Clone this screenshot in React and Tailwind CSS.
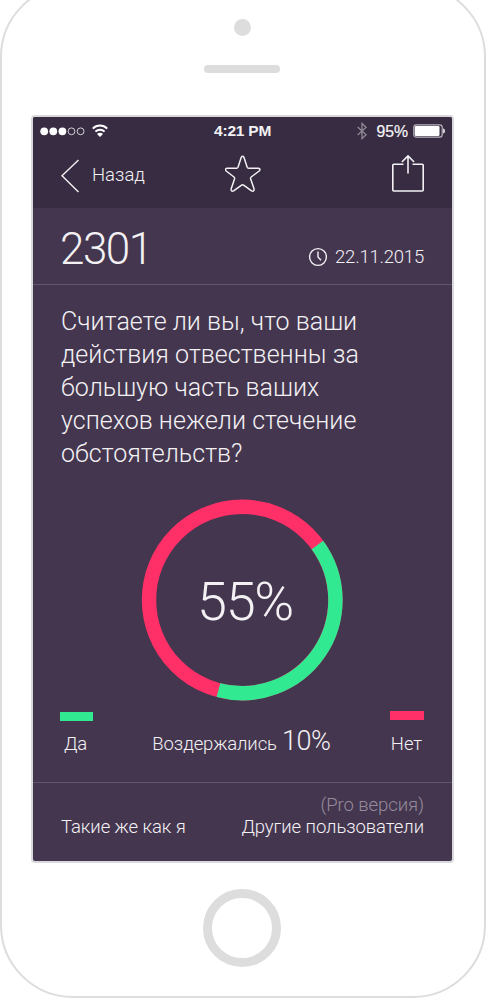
import React from "react";

function StatusBar() {
  return (
    <div className="flex h-[28px] items-center justify-between pl-[7px] pr-[7px]">
      <svg className="block h-[28px] w-[80px]" viewBox="0 0 80 28" fill="none">
        <circle cx="4.2" cy="14.3" r="3.9" fill="#fff" />
        <circle cx="13.3" cy="14.3" r="3.9" fill="#fff" />
        <circle cx="22.4" cy="14.3" r="3.9" fill="#fff" />
        <circle cx="31.5" cy="14.3" r="3.4" stroke="#d5d2d8" />
        <circle cx="40.6" cy="14.3" r="3.4" stroke="#d5d2d8" />
        <path d="M52.8 11.6a10.2 10.2 0 0 1 14.4 0" stroke="#fff" strokeWidth="2" />
        <path d="M55.4 14.6a6.5 6.5 0 0 1 9.2 0" stroke="#fff" strokeWidth="2" />
        <path d="M60 20l-3-3.1a4.2 4.2 0 0 1 6 0z" fill="#fff" />
      </svg>
      <div className="flex-1 pl-[94px] text-left">
        <span className="whitespace-nowrap font-['Liberation_Sans',Arial,sans-serif] text-[15.5px] font-bold leading-[28px] tracking-[-0.2px]">4:21 PM</span>
      </div>
      <svg className="mr-[9px] block h-[18px] w-[10px]" viewBox="0 0 10 18" fill="none" stroke="#8f8995" strokeWidth="1.3">
        <path d="M0.7 5l8.4 7.8L5 16.6V1.4l4.1 3.8L0.7 13" />
      </svg>
      <span className="mr-[5px] mt-px font-['Liberation_Sans',Arial,sans-serif] text-[15.8px] font-normal leading-[28px] [-webkit-text-stroke:0.2px_white]">95%</span>
      <svg className="block h-[14px] w-[32px]" viewBox="0 0 32 14" fill="none">
        <rect x="0.8" y="0.9" width="28.4" height="12.2" rx="2.4" stroke="#b9b5bd" strokeWidth="1.2" />
        <rect x="1.8" y="2" width="24.7" height="10" rx="1.2" fill="#fff" />
        <path d="M30.5 4.8c1.6.9 1.6 3.5 0 4.4z" fill="#d5d2d8" stroke="#d5d2d8" />
      </svg>
    </div>
  );
}

function NavBar() {
  return (
    <div className="flex h-[63px] items-start">
      <svg className="ml-[28px] mt-[14px] block h-[34px] w-[19px]" viewBox="0 0 19 34" fill="none" stroke="#f3f1f4" strokeWidth="1.4">
        <path d="M17.5 1L1 16.8L17.5 33" />
      </svg>
      <span className="ml-[12px] mt-[17px] w-[60px] whitespace-nowrap text-[18.5px] leading-[26px]">Назад</span>
      <svg className="ml-[73px] mt-[9px] block h-[39px] w-[36px]" viewBox="0 0 36 39" fill="none" stroke="#f3f1f4" strokeWidth="1.5" strokeLinejoin="round">
        <path d="M16.2 3.4Q17.6 1.2 19 3.4L22.2 13.2Q22.6 14.2 23.6 14.2H33.4Q36 14.8 34.2 17L26.2 23Q25.3 23.8 25.6 24.8L29.1 35Q29.3 37.9 26.6 36.9L18.6 31.1Q17.6 30.4 16.6 31.1L8.6 36.9Q5.9 37.9 6.1 35L9.6 24.8Q9.9 23.8 9 23L1.2 17Q-.6 14.8 1.8 14.2H11.6Q12.6 14.2 13 13.2Z" />
      </svg>
      <svg className="ml-[130px] mt-[9px] block h-[40px] w-[34px]" viewBox="0 0 34 40" fill="none" stroke="#f3f1f4" strokeWidth="1.6" strokeLinejoin="round">
        <path d="M12.5 10.2H2.8Q1.8 10.2 1.8 11.2V36Q1.8 37 2.8 37H31.2Q32.2 37 32.2 36V11.2Q32.2 10.2 31.2 10.2H21.5M17 19.6V2M10.9 8L17 1.9L23.1 8" />
      </svg>
    </div>
  );
}

function Donut() {
  return (
    <div className="ml-[108px] grid h-[202px] w-[202px] place-items-center">
      <svg className="col-start-1 row-start-1 block h-[202px] w-[202px]" viewBox="0 0 202 202" fill="none" strokeWidth="14.4">
        <circle cx="101.2" cy="101" r="93.2" stroke="#ff2f67" />
        <path d="M176.4 45.9A93.2 93.2 0 0 1 77.4 191.1" stroke="#31e991" />
      </svg>
      <span className="col-start-1 row-start-1 ml-[6px] mt-[3px] whitespace-nowrap text-[54px] font-light leading-[60px] tracking-[-1.3px]">55%</span>
    </div>
  );
}

export default function App() {
  return (
    <div className="h-[998px] w-[486px] overflow-hidden bg-white font-['Roboto','Noto_Sans',sans-serif] font-light text-[#f3f1f4]">
      <div className="-mt-[16px] flex h-[1014px] w-[486px] flex-col rounded-[73px] border-2 border-[#ddd] bg-white">
        <div className="ml-[231.5px] mt-[33px] h-[17px] w-[17px] shrink-0 rounded-full bg-[#ddd]" />
        <div className="ml-[202px] mt-[28.5px] h-[8.5px] w-[76px] shrink-0 rounded-full bg-[#ddd]" />
        <div className="ml-[29px] mt-[42px] w-[423px] shrink-0 rounded-[4px] border-2 border-[#d9d8da] bg-[#44364f]">
          <div className="h-[91px] rounded-t-[2px] bg-[#372c42]">
            <StatusBar />
            <NavBar />
          </div>
          <div className="flex h-[77px] justify-between border-b border-[#62566c] pl-[27px] pr-[28px]">
            <span className="mt-[15px] text-[44px] leading-[52px] tracking-[-1.5px]">2301</span>
            <div className="mt-[36px] flex h-[26px] items-center">
              <svg className="mr-[7px] block h-[20px] w-[20px]" viewBox="0 0 20 20" fill="none" stroke="#f3f1f4" strokeWidth="1.4">
                <circle cx="10" cy="10" r="8.4" />
                <path d="M10 4.5V10L13 13.2" />
              </svg>
              <span className="text-[18.5px] leading-[26px] tracking-[-0.2px]">22.11.2015</span>
            </div>
          </div>
          <p className="ml-[28px] mt-[20px] h-[165px] whitespace-nowrap text-[25px] leading-[33px] tracking-[0.03px]">
            Считаете ли вы, что ваши<br />
            действия отвественны за<br />
            большую часть ваших<br />
            успехов нежели стечение<br />
            обстоятельств?
          </p>
          <div className="mt-[29px]">
            <Donut />
          </div>
          <div className="flex h-[81px] items-start justify-between pl-[27px] pr-[28px]">
            <div className="flex w-[33px] flex-col items-center pt-[11px]">
              <div className="h-[9px] w-[33px] bg-[#31e991]" />
              <span className="mr-[2px] mt-[10px] text-[18.5px] leading-[26px] tracking-[-0.2px]">Да</span>
            </div>
            <div className="flex items-baseline whitespace-nowrap pt-[24px] text-[18.5px] leading-[32px] tracking-[-0.1px]">
              Воздержались <span className="ml-[5px] text-[27px] tracking-[-0.4px]">10%</span>
            </div>
            <div className="flex w-[34px] flex-col items-center pt-[10px]">
              <div className="h-[9px] w-[34px] bg-[#ff2f67]" />
              <span className="mr-[1px] mt-[11px] text-[18.5px] leading-[26px]">Нет</span>
            </div>
          </div>
          <div className="flex h-[79px] items-start justify-between border-t border-[#62566c] pl-[28px] pr-[28px] text-[18.5px] leading-[22px] tracking-[-0.07px]">
            <span className="mt-[33px]">Такие же как я</span>
            <div className="mt-[11px] text-right">
              <div className="text-[#958b9b]">(Pro версия)</div>
              <div>Другие пользователи</div>
            </div>
          </div>
        </div>
        <div className="ml-[201px] mt-[26px] h-[78px] w-[78px] shrink-0 rounded-full border-[9px] border-[#ddd]" />
      </div>
    </div>
  );
}
